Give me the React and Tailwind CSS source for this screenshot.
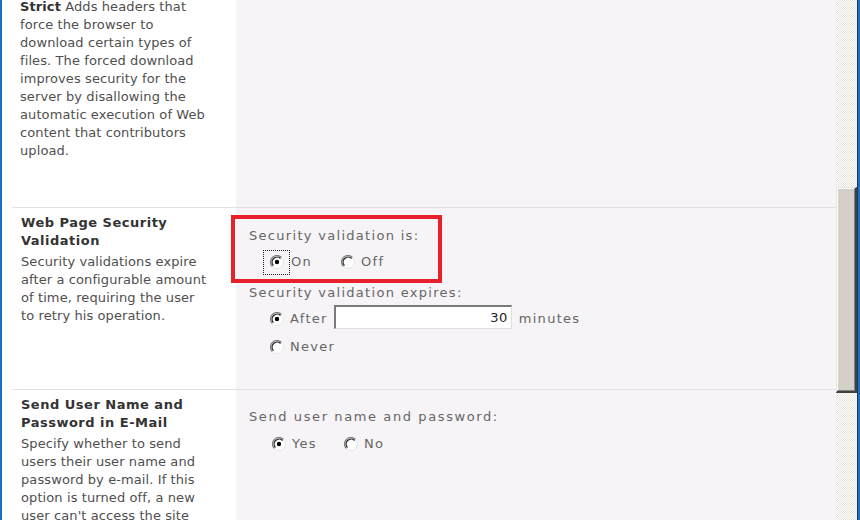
import React from "react";

function Radio({ checked }) {
  return (
    <svg width="14" height="14" viewBox="0 0 14 14" className="shrink-0">
      <circle cx="7" cy="7" r="6.5" fill="#ffffff" />
      <path d="M11.6 2.4 A6.5 6.5 0 0 0 2.4 11.6" fill="none" stroke="#7a7a7a" strokeWidth="1.2" />
      <path d="M10.6 3.4 A5.1 5.1 0 0 0 3.4 10.6" fill="none" stroke="#2e2e2e" strokeWidth="1.4" />
      <path d="M2.4 11.6 A6.5 6.5 0 0 0 11.6 2.4" fill="none" stroke="#e4e4e4" strokeWidth="1" />
      {checked && <circle cx="7" cy="7" r="2.2" fill="#000000" />}
    </svg>
  );
}

function Sep() {
  return (
    <div className="flex h-px shrink-0">
      <div className="w-[10px] bg-white" />
      <div className="flex-1 bg-[#e2e1e2]" />
    </div>
  );
}

const desc = "text-[13px] leading-[18px] tracking-[0.1px] text-[#4f4f4f] whitespace-nowrap";
const title = "text-[13px] leading-[18px] tracking-[0.5px] font-bold text-[#333333] whitespace-nowrap";
const lab = "text-[13px] leading-[18px] text-[#666666] tracking-[1.3px] whitespace-nowrap";

export default function App() {
  return (
    <div
      className="relative w-[860px] h-[520px] overflow-hidden flex bg-white"
      style={{ fontFamily: '"DejaVu Sans", Verdana, sans-serif' }}
    >
      <div className="w-[2px] bg-[#1c6fc4] shrink-0" />
      <div className="flex-1 flex flex-col">
        {/* Section 1 */}
        <div className="flex h-[207px] shrink-0">
          <div className="w-[234px] bg-white pl-[18px] -mt-[2px]">
            <div className={desc}><span className="font-bold text-[#333333]">Strict</span> Adds headers that</div>
            <div className={desc}>force the browser to</div>
            <div className={desc}>download certain types of</div>
            <div className={desc}>files. The forced download</div>
            <div className={desc}>improves security for the</div>
            <div className={desc}>server by disallowing the</div>
            <div className={desc}>automatic execution of Web</div>
            <div className={desc}>content that contributors</div>
            <div className={desc}>upload.</div>
          </div>
          <div className="flex-1 bg-[#f7f4f7]" />
        </div>
        <Sep />
        {/* Section 2 */}
        <div className="flex h-[181px] shrink-0">
          <div className="w-[234px] bg-white pl-[19px] pt-[6px]">
            <div className={title}>Web Page Security</div>
            <div className={title}>Validation</div>
            <div className="mt-[3px]">
              <div className={desc}>Security validations expire</div>
              <div className={desc}>after a configurable amount</div>
              <div className={desc}>of time, requiring the user</div>
              <div className={desc}>to retry his operation.</div>
            </div>
          </div>
          <div className="flex-1 bg-[#f7f4f7] pl-[13px] pt-[19px]">
            <div className={lab}>Security validation is:</div>
            <div className="flex items-center h-[24px] mt-[5px]">
              <div className="ml-[14px] w-[27px] h-[25px] flex items-center justify-center border border-dotted border-[#222]">
                <Radio checked />
              </div>
              <span className={lab + " ml-[1px]"}>On</span>
              <div className="ml-[29px]"><Radio /></div>
              <span className={lab + " ml-[6px]"}>Off</span>
            </div>
            <div className={lab + " mt-[10px]"}>Security validation expires:</div>
            <div className="flex items-center h-[26px] mt-[4px]">
              <div className="ml-[21px]"><Radio checked /></div>
              <span className={lab + " ml-[6px]"}>After</span>
              <div className="ml-[6px] mb-[4px] w-[178px] h-[24px] bg-white border-t-2 border-l-2 border-t-[#7a7a7a] border-l-[#7a7a7a] border-r border-b border-r-[#dedede] border-b-[#dedede] flex items-center justify-end pr-[3px]">
                <span className="text-[13px] tracking-[0.5px] text-[#222]">30</span>
              </div>
              <span className={lab + " ml-[7px]"}>minutes</span>
            </div>
            <div className="flex items-center h-[24px] mt-[3px]">
              <div className="ml-[21px]"><Radio /></div>
              <span className={lab + " ml-[6px]"}>Never</span>
            </div>
          </div>
        </div>
        <Sep />
        {/* Section 3 */}
        <div className="flex flex-1">
          <div className="w-[234px] bg-white pl-[19px] pt-[6px]">
            <div className={title}>Send User Name and</div>
            <div className={title}>Password in E-Mail</div>
            <div className="mt-[3px]">
              <div className={desc}>Specify whether to send</div>
              <div className={desc}>users their user name and</div>
              <div className={desc}>password by e-mail. If this</div>
              <div className={desc}>option is turned off, a new</div>
              <div className={desc}>user can't access the site</div>
            </div>
          </div>
          <div className="flex-1 bg-[#f7f4f7] pl-[13px] pt-[18px]">
            <div className={lab + " tracking-[1.6px]"}>Send user name and password:</div>
            <div className="flex items-center h-[24px] mt-[6px]">
              <div className="ml-[23px]"><Radio checked /></div>
              <span className={lab + " ml-[6px]"}>Yes</span>
              <div className="ml-[27px]"><Radio /></div>
              <span className={lab + " ml-[6px]"}>No</span>
            </div>
          </div>
        </div>
      </div>
      {/* Scrollbar */}
      <div className="w-[21px] shrink-0 flex flex-col bg-[#ece9e3] bg-[repeating-conic-gradient(#ffffff_0_25%,#e6e3dd_0_50%)] bg-[length:2px_2px]">
        <div className="h-[187px] shrink-0" />
        <div className="h-[206px] shrink-0 bg-[#d4d0c8] border-l border-t border-l-[#e8e6e1] border-t-[#e8e6e1] border-r-2 border-b-2 border-r-[#404040] border-b-[#404040]">
          <div className="h-full border-l border-t border-white border-r border-b border-r-[#808080] border-b-[#808080]" />
        </div>
      </div>
      <div className="w-[3px] shrink-0 flex">
        <div className="w-px bg-[#0b3a6e]" />
        <div className="w-[2px] bg-[#1c6fc4]" />
      </div>
      {/* Red annotation box */}
      <div className="absolute left-[231px] top-[215px] w-[211px] h-[68px] border-[4px] border-[#e8202a]" />
    </div>
  );
}
